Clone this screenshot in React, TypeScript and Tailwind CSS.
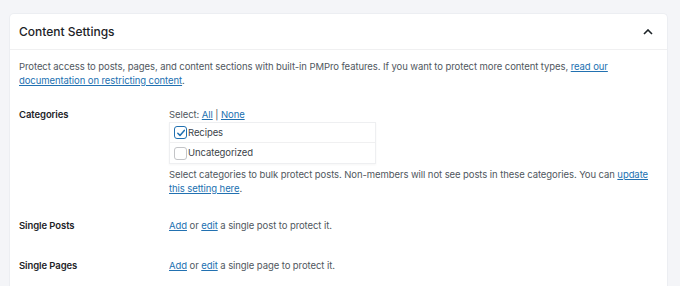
import React from 'react';

function Check({ checked, label }: { checked: boolean; label: string }) {
    return (
        <label className="flex items-center gap-[1px] h-[20px] px-[4px]">
            <span className={`w-[13px] h-[13px] rounded-[3px] border flex items-center justify-center bg-white ${checked ? 'border-[#2271b1]' : 'border-[#c3c4c7]'}`}>
                {checked && (
                    <svg width="10" height="10" viewBox="0 0 10 10" fill="none">
                        <path d="M1.8 5.2 L4 7.4 L8.3 2.4" stroke="#2271b1" strokeWidth="1.5" strokeLinecap="round" strokeLinejoin="round" />
                    </svg>
                )}
            </span>
            <span className="text-[#3c434a]">{label}</span>
        </label>
    );
}

export default function App() {
    const link = 'text-[#2271b1] underline';
    return (
        <div className="min-h-screen bg-[#f4f5f8] pt-[13px] pl-[9px] font-['Inter',sans-serif] text-[9.5px] tracking-[-0.08px] leading-[14px] text-[#50575e]">
            <div className="w-[659px] bg-white rounded-t-[5px] border border-[#eceef2] border-b-0">
                <div className="flex items-center justify-between h-[36px] pl-[9px] pr-[14px] border-b border-[#f0f0f1]">
                    <h2 className="text-[12px] font-medium tracking-normal text-[#1d2327]">Content Settings</h2>
                    <svg width="10" height="6" viewBox="0 0 10 6" fill="none">
                        <path d="M1 5 L5 1 L9 5" stroke="#1d2327" strokeWidth="1.6" />
                    </svg>
                </div>
                <div className="px-[9px] pt-[10px] pb-[20px]">
                    <p className="mb-[20px]">
                        Protect access to posts, pages, and content sections with built-in PMPro features. If you want to protect more content types, <a className={link}>read our documentation on restricting content</a>.
                    </p>
                    <div className="flex">
                        <div className="w-[150px] font-semibold text-[#1d2327]">Categories</div>
                        <div className="flex-1">
                            <div>Select: <a className={link}>All</a> | <a className={link}>None</a></div>
                            <div className="w-[207px] border border-[#eeeff1] shadow-[0_1px_2px_rgba(0,0,0,0.04)] divide-y divide-[#f0f0f1]">
                                <Check checked label="Recipes" />
                                <Check checked={false} label="Uncategorized" />
                            </div>
                            <p className="mt-[4px]">
                                Select categories to bulk protect posts. Non-members will not see posts in these categories. You can <a className={link}>update this setting here</a>.
                            </p>
                        </div>
                    </div>
                    <div className="flex mt-[23px]">
                        <div className="w-[150px] font-semibold text-[#1d2327]">Single Posts</div>
                        <div><a className={link}>Add</a> or <a className={link}>edit</a> a single post to protect it.</div>
                    </div>
                    <div className="flex mt-[26px]">
                        <div className="w-[150px] font-semibold text-[#1d2327]">Single Pages</div>
                        <div><a className={link}>Add</a> or <a className={link}>edit</a> a single page to protect it.</div>
                    </div>
                </div>
            </div>
        </div>
    );
}
